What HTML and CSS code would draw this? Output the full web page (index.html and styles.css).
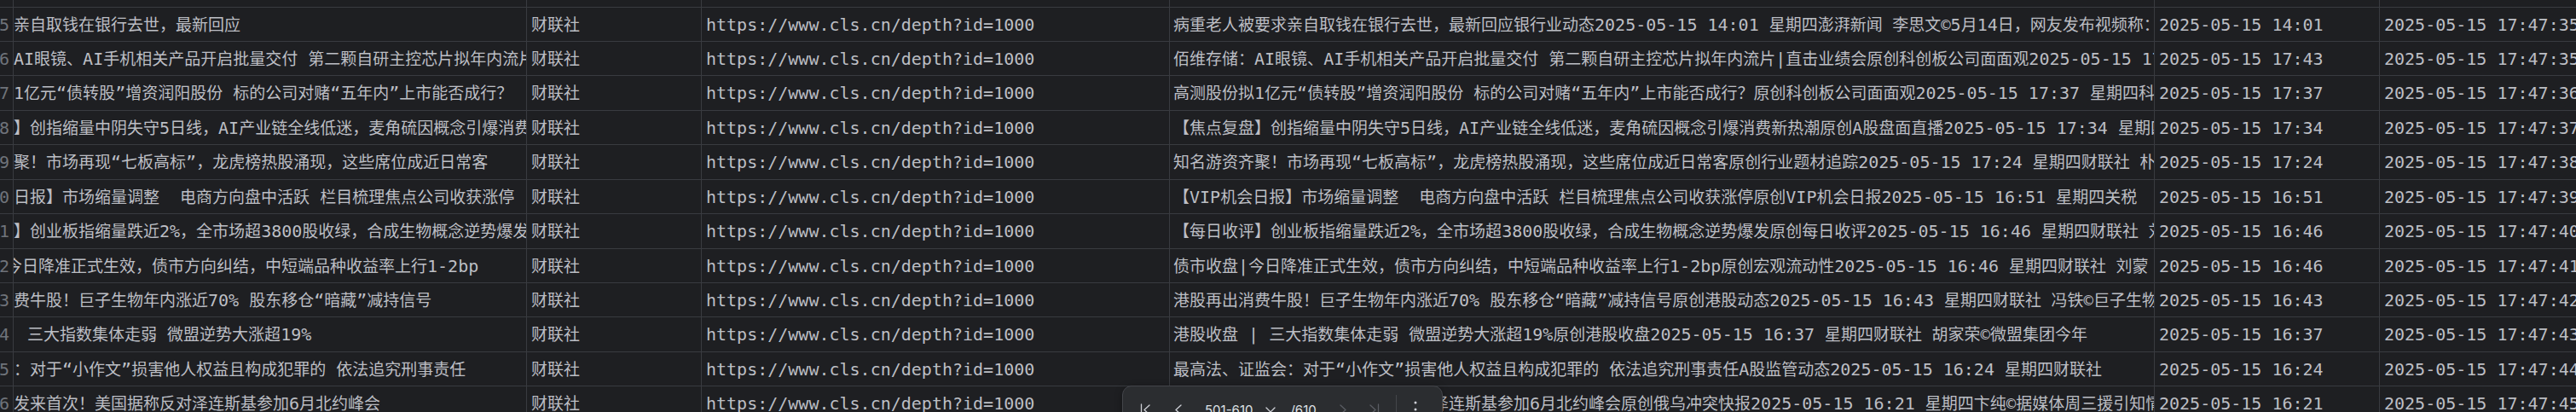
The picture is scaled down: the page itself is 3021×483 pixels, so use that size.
FILE: index.html
```html
<!DOCTYPE html>
<html lang="zh-CN">
<head>
<meta charset="utf-8">
<title>Data grid</title>
<link rel="stylesheet" href="styles.css">
</head>
<body>
<div class="grid">
  <div class="row partial">
    <div class="c gut"></div><div class="c title"></div><div class="c"></div><div class="c"></div><div class="c"></div><div class="c"></div><div class="c last"></div>
  </div>
  <div class="row">
    <div class="c gut">595</div>
    <div class="c title"><span class="t">亲自取钱在银行去世，最新回应</span></div>
    <div class="c src">财联社</div>
    <div class="c url">https://www.cls.cn/depth?id=1000</div>
    <div class="c body">病重老人被要求亲自取钱在银行去世，最新回应银行业动态<span class="m">2025-05-15 14:01 </span>星期四澎湃新闻 李思文©<span class="m">5</span>月<span class="m">14</span>日，网友发布视频称：</div>
    <div class="c date">2025-05-15 14:01</div>
    <div class="c date last">2025-05-15 17:47:35</div>
  </div>
  <div class="row">
    <div class="c gut">596</div>
    <div class="c title"><span class="t"><span class="m">AI</span>眼镜、<span class="m">AI</span>手机相关产品开启批量交付<span class="m"> </span>第二颗自研主控芯片拟年内流片</span></div>
    <div class="c src">财联社</div>
    <div class="c url">https://www.cls.cn/depth?id=1000</div>
    <div class="c body">佰维存储：<span class="m">AI</span>眼镜、<span class="m">AI</span>手机相关产品开启批量交付<span class="m"> </span>第二颗自研主控芯片拟年内流片<span class="m">|</span>直击业绩会原创科创板公司面面观<span class="m">2025-05-15 17:43 </span>星期四</div>
    <div class="c date">2025-05-15 17:43</div>
    <div class="c date last">2025-05-15 17:47:35</div>
  </div>
  <div class="row">
    <div class="c gut">597</div>
    <div class="c title"><span class="t"><span class="m">1</span>亿元<span class="m">“</span>债转股<span class="m">”</span>增资润阳股份<span class="m"> </span>标的公司对赌<span class="m">“</span>五年内<span class="m">”</span>上市能否成行？</span></div>
    <div class="c src">财联社</div>
    <div class="c url">https://www.cls.cn/depth?id=1000</div>
    <div class="c body">高测股份拟<span class="m">1</span>亿元<span class="m">“</span>债转股<span class="m">”</span>增资润阳股份<span class="m"> </span>标的公司对赌<span class="m">“</span>五年内<span class="m">”</span>上市能否成行？原创科创板公司面面观<span class="m">2025-05-15 17:37 </span>星期四科创板日报</div>
    <div class="c date">2025-05-15 17:37</div>
    <div class="c date last">2025-05-15 17:47:36</div>
  </div>
  <div class="row">
    <div class="c gut">598</div>
    <div class="c title"><span class="t">】创指缩量中阴失守<span class="m">5</span>日线，<span class="m">AI</span>产业链全线低迷，麦角硫因概念引爆消费新热潮</span></div>
    <div class="c src">财联社</div>
    <div class="c url">https://www.cls.cn/depth?id=1000</div>
    <div class="c body">【焦点复盘】创指缩量中阴失守<span class="m">5</span>日线，<span class="m">AI</span>产业链全线低迷，麦角硫因概念引爆消费新热潮原创<span class="m">A</span>股盘面直播<span class="m">2025-05-15 17:34 </span>星期四财联社</div>
    <div class="c date">2025-05-15 17:34</div>
    <div class="c date last">2025-05-15 17:47:37</div>
  </div>
  <div class="row">
    <div class="c gut">599</div>
    <div class="c title"><span class="t">聚！市场再现<span class="m">“</span>七板高标<span class="m">”</span>，龙虎榜热股涌现，这些席位成近日常客</span></div>
    <div class="c src">财联社</div>
    <div class="c url">https://www.cls.cn/depth?id=1000</div>
    <div class="c body">知名游资齐聚！市场再现<span class="m">“</span>七板高标<span class="m">”</span>，龙虎榜热股涌现，这些席位成近日常客原创行业题材追踪<span class="m">2025-05-15 17:24 </span>星期四财联社 朴实</div>
    <div class="c date">2025-05-15 17:24</div>
    <div class="c date last">2025-05-15 17:47:38</div>
  </div>
  <div class="row">
    <div class="c gut">600</div>
    <div class="c title"><span class="t">日报】市场缩量调整<span class="m">  </span>电商方向盘中活跃<span class="m"> </span>栏目梳理焦点公司收获涨停</span></div>
    <div class="c src">财联社</div>
    <div class="c url">https://www.cls.cn/depth?id=1000</div>
    <div class="c body">【<span class="m">VIP</span>机会日报】市场缩量调整<span class="m">  </span>电商方向盘中活跃<span class="m"> </span>栏目梳理焦点公司收获涨停原创<span class="m">VIP</span>机会日报<span class="m">2025-05-15 16:51 </span>星期四关税</div>
    <div class="c date">2025-05-15 16:51</div>
    <div class="c date last">2025-05-15 17:47:39</div>
  </div>
  <div class="row">
    <div class="c gut">601</div>
    <div class="c title"><span class="t">】创业板指缩量跌近<span class="m">2%</span>，全市场超<span class="m">3800</span>股收绿，合成生物概念逆势爆发</span></div>
    <div class="c src">财联社</div>
    <div class="c url">https://www.cls.cn/depth?id=1000</div>
    <div class="c body">【每日收评】创业板指缩量跌近<span class="m">2%</span>，全市场超<span class="m">3800</span>股收绿，合成生物概念逆势爆发原创每日收评<span class="m">2025-05-15 16:46 </span>星期四财联社 刘</div>
    <div class="c date">2025-05-15 16:46</div>
    <div class="c date last">2025-05-15 17:47:40</div>
  </div>
  <div class="row">
    <div class="c gut">602</div>
    <div class="c title"><span class="t shift-l">今日降准正式生效，债市方向纠结，中短端品种收益率上行<span class="m">1-2bp</span></span></div>
    <div class="c src">财联社</div>
    <div class="c url">https://www.cls.cn/depth?id=1000</div>
    <div class="c body">债市收盘<span class="m">|</span>今日降准正式生效，债市方向纠结，中短端品种收益率上行<span class="m">1-2bp</span>原创宏观流动性<span class="m">2025-05-15 16:46 </span>星期四财联社 刘蒙</div>
    <div class="c date">2025-05-15 16:46</div>
    <div class="c date last">2025-05-15 17:47:41</div>
  </div>
  <div class="row">
    <div class="c gut">603</div>
    <div class="c title"><span class="t">费牛股！巨子生物年内涨近<span class="m">70% </span>股东移仓<span class="m">“</span>暗藏<span class="m">”</span>减持信号</span></div>
    <div class="c src">财联社</div>
    <div class="c url">https://www.cls.cn/depth?id=1000</div>
    <div class="c body">港股再出消费牛股！巨子生物年内涨近<span class="m">70% </span>股东移仓<span class="m">“</span>暗藏<span class="m">”</span>减持信号原创港股动态<span class="m">2025-05-15 16:43 </span>星期四财联社 冯铁©巨子生物</div>
    <div class="c date">2025-05-15 16:43</div>
    <div class="c date last">2025-05-15 17:47:42</div>
  </div>
  <div class="row">
    <div class="c gut">604</div>
    <div class="c title"><span class="t shift-r"><span class="m"> </span>三大指数集体走弱<span class="m"> </span>微盟逆势大涨超<span class="m">19%</span></span></div>
    <div class="c src">财联社</div>
    <div class="c url">https://www.cls.cn/depth?id=1000</div>
    <div class="c body">港股收盘<span class="m"> | </span>三大指数集体走弱<span class="m"> </span>微盟逆势大涨超<span class="m">19%</span>原创港股收盘<span class="m">2025-05-15 16:37 </span>星期四财联社 胡家荣©微盟集团今年</div>
    <div class="c date">2025-05-15 16:37</div>
    <div class="c date last">2025-05-15 17:47:43</div>
  </div>
  <div class="row">
    <div class="c gut">605</div>
    <div class="c title"><span class="t">：对于<span class="m">“</span>小作文<span class="m">”</span>损害他人权益且构成犯罪的<span class="m"> </span>依法追究刑事责任</span></div>
    <div class="c src">财联社</div>
    <div class="c url">https://www.cls.cn/depth?id=1000</div>
    <div class="c body">最高法、证监会：对于<span class="m">“</span>小作文<span class="m">”</span>损害他人权益且构成犯罪的<span class="m"> </span>依法追究刑事责任<span class="m">A</span>股监管动态<span class="m">2025-05-15 16:24 </span>星期四财联社</div>
    <div class="c date">2025-05-15 16:24</div>
    <div class="c date last">2025-05-15 17:47:44</div>
  </div>
  <div class="row">
    <div class="c gut">606</div>
    <div class="c title"><span class="t">发来首次！美国据称反对泽连斯基参加<span class="m">6</span>月北约峰会</span></div>
    <div class="c src">财联社</div>
    <div class="c url">https://www.cls.cn/depth?id=1000</div>
    <div class="c body">特朗普政府发来首次！美国据称反对泽连斯基参加<span class="m">6</span>月北约峰会原创俄乌冲突快报<span class="m">2025-05-15 16:21 </span>星期四卞纯©据媒体周三援引知情人士</div>
    <div class="c date">2025-05-15 16:21</div>
    <div class="c date last">2025-05-15 17:47:45</div>
  </div>

  <div class="pager">
    <svg class="ic" viewBox="0 0 20 20"><path d="M4.5 4v13M14 5l-6 5.5 6 5.5"/></svg>
    <svg class="ic prev" viewBox="0 0 20 20"><path d="M13 5l-6 5.5 6 5.5"/></svg>
    <span class="range">501-610</span>
    <svg class="ic dd" viewBox="0 0 20 20"><path d="M5 8l5 5 5-5"/></svg>
    <span class="total">/610</span>
    <svg class="ic off next" viewBox="0 0 20 20"><path d="M7 5l6 5.5-6 5.5"/></svg>
    <svg class="ic off" viewBox="0 0 20 20"><path d="M6 5l6 5.5-6 5.5M15.5 4v13"/></svg>
    <span class="sep"></span>
    <svg class="ic kebab" viewBox="0 0 20 20"><circle cx="10" cy="2" r="1.5"/><circle cx="10" cy="10" r="1.5"/><circle cx="10" cy="18" r="1.5"/></svg>
  </div>
</div>
</body>
</html>
```

FILE: styles.css
```css
html, body {
  margin: 0;
  padding: 0;
  background: #1e1f22;
}

body {
  width: 3021px;
  height: 483px;
  overflow: hidden;
}

.grid {
  position: relative;
  font-family: "DejaVu Sans Mono", "Noto Sans CJK SC", monospace;
  font-size: 19px;
  color: #bcbec4;
}

.row {
  display: grid;
  grid-template-columns: 16px 602px 205px 549px 1155px 264px 1fr;
  height: 40.45px;
  box-sizing: border-box;
  border-bottom: 1px solid #393b40;
}

.row.partial {
  height: 8.5px;
}

.c {
  min-width: 0;
  box-sizing: border-box;
  border-right: 1px solid #393b40;
  overflow: hidden;
  white-space: pre;
  padding: 2px 0 0 5px;
  line-height: 37px;
}

.c.last {
  border-right: none;
}

.gut {
  display: flex;
  justify-content: flex-end;
  padding: 2px 4px 0 0;
  color: #6f737a;
  font-size: 20px;
}

.title {
  padding-left: 0;
}

.t {
  display: inline-block;
}

.shift-l {
  margin-left: -9px;
}

.shift-r {
  margin-left: 4px;
}

.m {
  font-size: 20px;
}

.url,
.date {
  font-size: 20px;
}

.src {
  padding-left: 5px;
}

.body {
  padding-left: 4px;
}

/* floating pager over the grid */
.pager {
  position: absolute;
  left: 1316px;
  top: 452px;
  width: 376px;
  height: 56px;
  box-sizing: border-box;
  background: #2b2d30;
  border: 1px solid #43454a;
  border-radius: 11px;
  box-shadow: 0 2px 8px rgba(0, 0, 0, 0.35);
  display: flex;
  align-items: center;
  padding: 0 0 0 17px;
  font-family: Inter, "Noto Sans", sans-serif;
  font-size: 15px;
  color: #dfe1e5;
}

.ic {
  width: 20px;
  height: 20px;
  flex: none;
  fill: none;
  stroke: #ced0d6;
  stroke-width: 1.3;
  stroke-linecap: round;
  stroke-linejoin: round;
}

.ic.off {
  stroke: #5a5d63;
}

.prev {
  margin-left: 18px;
}

.range {
  margin-left: 21px;
}

.dd {
  margin-left: 11px;
}

.total {
  margin-left: 13px;
}

.next {
  margin-left: 21px;
}

.ic.off + .ic.off {
  margin-left: 16px;
}

.sep {
  width: 1px;
  height: 34px;
  align-self: flex-start;
  margin-top: 10px;
  margin-left: 16px;
  background: #43454a;
}

.kebab {
  margin-left: 12px;
  stroke: none;
  fill: #ced0d6;
}
```
